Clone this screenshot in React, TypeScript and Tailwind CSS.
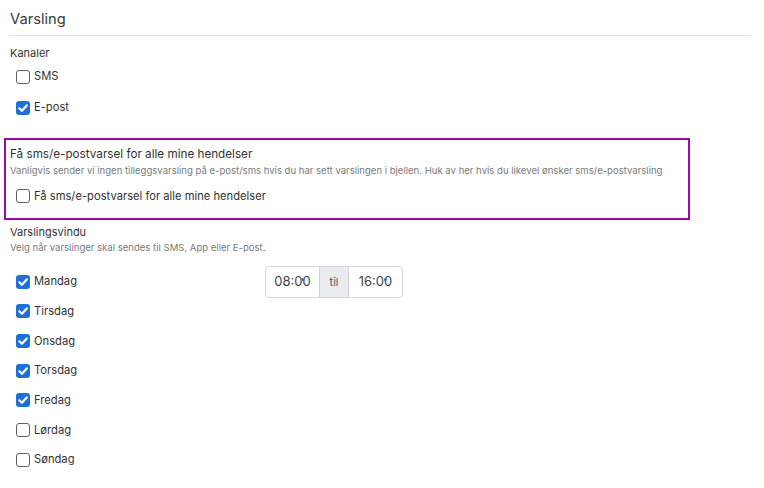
import React from "react";

function Box({ checked }: { checked: boolean }) {
  return checked ? (
    <span className="flex h-[14px] w-[14px] shrink-0 items-center justify-center rounded-[3px] bg-[#1f6fd8]">
      <svg width="12" height="12" viewBox="0 0 12 12">
        <path d="M2.3 6.3 L4.9 8.8 L9.8 3.4" fill="none" stroke="#fff" strokeWidth="2.2" strokeLinecap="round" strokeLinejoin="round" />
      </svg>
    </span>
  ) : (
    <span className="block h-[14px] w-[14px] shrink-0 rounded-[3px] border border-[#5f5f5f] bg-white" />
  );
}

function Check({ label, checked, h = "h-[31px]" }: { label: string; checked: boolean; h?: string }) {
  return (
    <div className={`flex items-center gap-[4px] pl-[6px] text-[11.2px] text-[#333] ${h}`}>
      <Box checked={checked} />
      <span>{label}</span>
    </div>
  );
}

const days: [string, boolean][] = [
  ["Mandag", true],
  ["Tirsdag", true],
  ["Onsdag", true],
  ["Torsdag", true],
  ["Fredag", true],
  ["Lørdag", false],
  ["Søndag", false],
];

export default function App() {
  return (
    <div className="h-[488px] w-[764px] overflow-hidden bg-white pl-[4px] font-['Inter',sans-serif] text-[#333]">
      <div className="pl-[6px] pt-[8px]">
        <h2 className="text-[14.7px] leading-[22px] text-[#3a3a3a]">Varsling</h2>
        <div className="mt-[5px] h-px w-[741px] bg-[#e0e0e0]" />
        <div className="mt-[9px] text-[11px] leading-[16px]">Kanaler</div>
      </div>
      <div className="pl-[6px]">
        <Check label="SMS" checked={false} />
        <Check label="E-post" checked={true} />
      </div>
      <div className="mt-[15px] h-[82px] w-[686px] border-2 border-[#9b0aa3] pl-[4px] pt-[6px]">
        <div className="text-[11.7px] leading-[16px]">Få sms/e-postvarsel for alle mine hendelser</div>
        <div className="mt-[2px] whitespace-nowrap text-[9.55px] leading-[14px] text-[#7a7a7a]">
          Vanligvis sender vi ingen tilleggsvarsling på e-post/sms hvis du har sett varslingen i bjellen. Huk av her hvis du likevel ønsker sms/e-postvarsling
        </div>
        <div className="mt-[3px]">
          <Check label="Få sms/e-postvarsel for alle mine hendelser" checked={false} h="h-[30px]" />
        </div>
      </div>
      <div className="pl-[6px]">
        <div className="mt-[4px] text-[11px] leading-[16px]">Varslingsvindu</div>
        <div className="mt-[1px] text-[9.55px] leading-[14px] text-[#7a7a7a]">
          Velg når varslinger skal sendes til SMS, App eller E-post.
        </div>
        <div className="mt-[12px] flex">
          <div className="w-[255px]">
            {days.map(([d, c]) => (
              <Check key={d} label={d} checked={c} h="h-[29.67px]" />
            ))}
          </div>
          <div className="-mt-[1px] flex h-[32px] text-[#444]">
            <div className="relative flex w-[55px] items-center justify-center rounded-l-[4px] border border-[#d3d7db] text-[13px]">
              08:00
              <span className="absolute right-[15px] top-[11px] h-[3px] w-[3px] rounded-full bg-[#1f6fd8]" />
            </div>
            <div className="flex w-[28px] items-center justify-center border-y border-[#d3d7db] bg-[#e9ecef] text-[11px] text-[#555]">
              til
            </div>
            <div className="relative flex w-[55px] items-center justify-center rounded-r-[4px] border border-[#d3d7db] text-[13px]">
              16:00
              <span className="absolute right-[15px] top-[11px] h-[3px] w-[3px] rounded-full bg-[#1f6fd8]" />
            </div>
          </div>
        </div>
      </div>
    </div>
  );
}
